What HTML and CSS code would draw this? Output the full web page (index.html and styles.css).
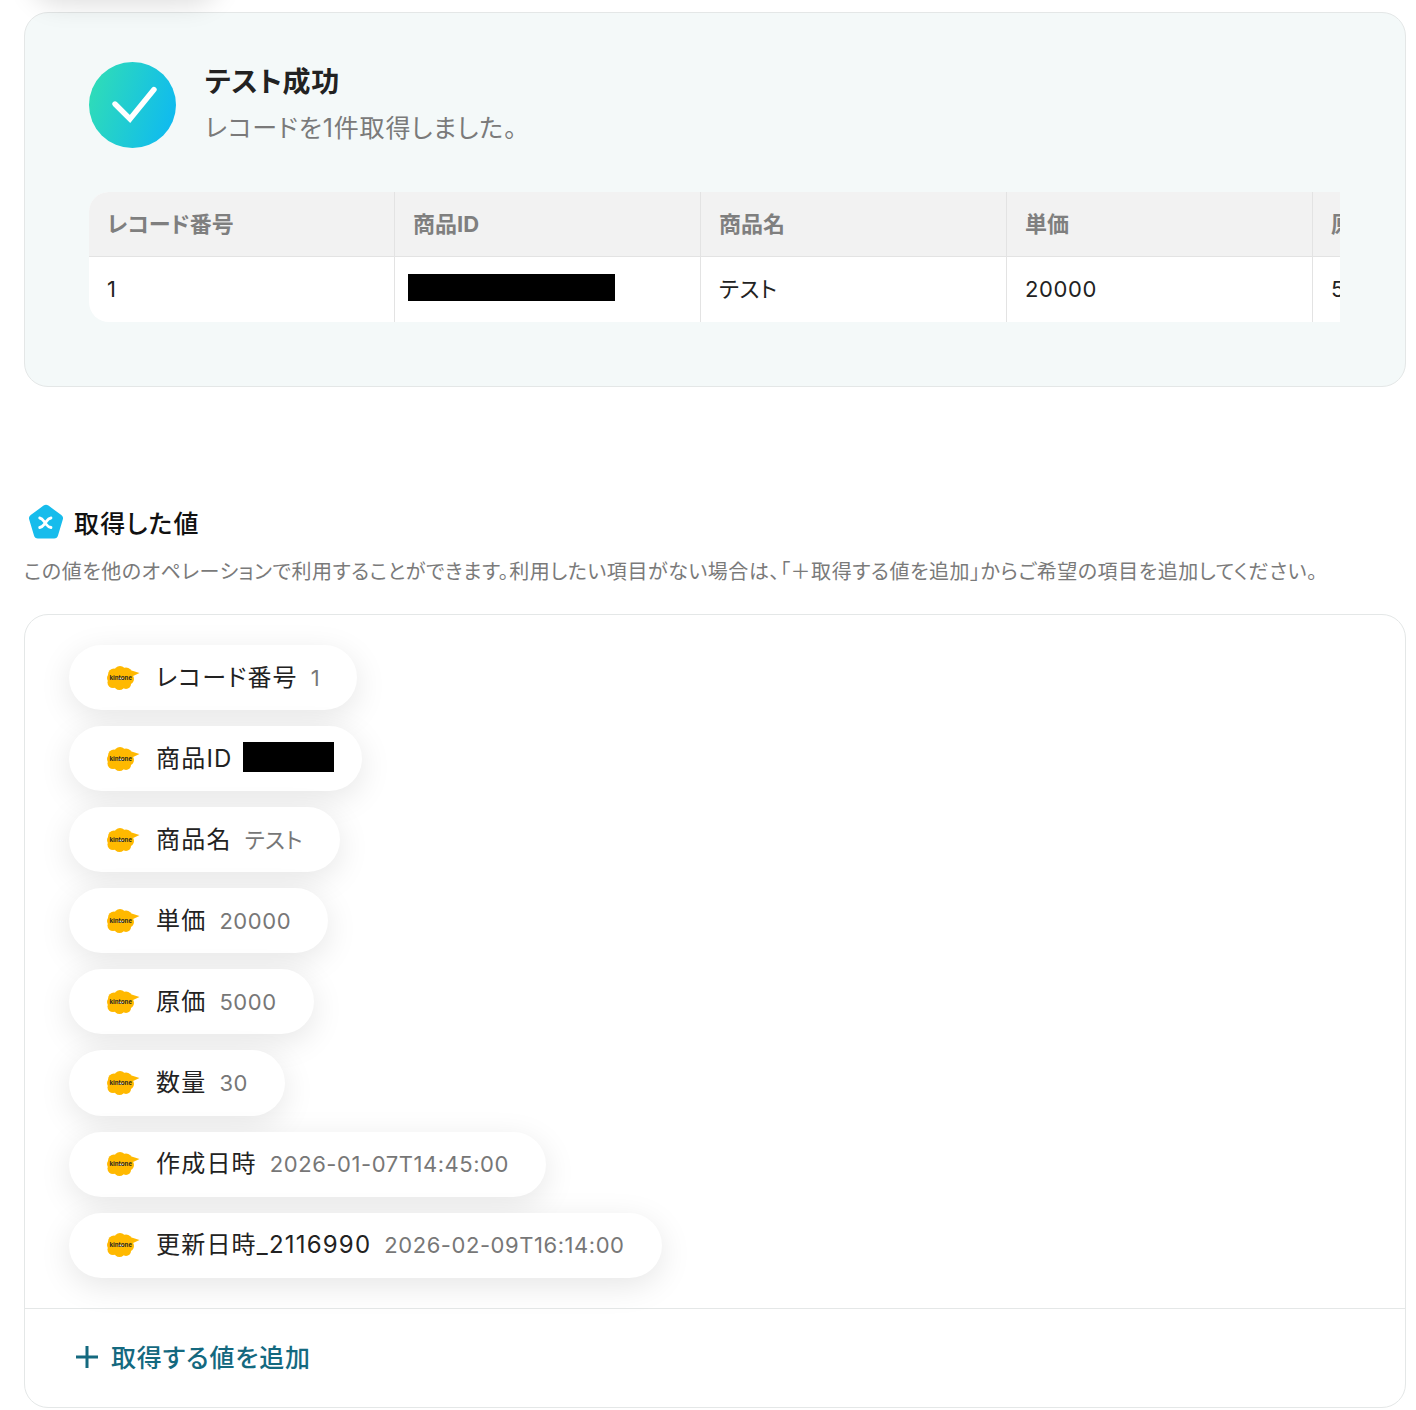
FILE: index.html
```html
<!DOCTYPE html>
<html lang="ja">
<head>
<meta charset="utf-8">
<title>テスト成功</title>
<link rel="stylesheet" href="styles.css">
</head>
<body>
<div class="page">
  <div class="clipped-shadow"></div>
  <section class="result-card">
    <div class="result-head">
      <svg class="check" viewBox="0 0 87 86" aria-hidden="true">
        <defs><linearGradient id="chk" x1="0" y1="0.35" x2="1" y2="0.65"><stop offset="0" stop-color="#2fdcb8"/><stop offset="1" stop-color="#0fbaf0"/></linearGradient></defs>
        <ellipse cx="43.5" cy="43" rx="43.5" ry="43" fill="url(#chk)"/>
        <path d="M26 42 L41 57 L65 27.500" fill="none" stroke="#fff" stroke-width="5.4" stroke-linecap="round" stroke-linejoin="miter"/>
      </svg>
      <div class="result-text">
        <h2 class="result-title">テスト成功</h2>
        <p class="result-sub">レコードを1件取得しました。</p>
      </div>
    </div>
    <div class="table-clip">
      <div class="record-table">
        <div class="cell head">レコード番号</div>
        <div class="cell head">商品ID</div>
        <div class="cell head">商品名</div>
        <div class="cell head">単価</div>
        <div class="cell head">原価</div>
        <div class="cell body">1</div>
        <div class="cell body"><span class="redact redact-table"></span></div>
        <div class="cell body">テスト</div>
        <div class="cell body">20000</div>
        <div class="cell body">5000</div>
      </div>
    </div>
  </section>

  <div class="values-title">
    <svg class="pentagon" viewBox="0 0 36 36" aria-hidden="true">
      <path d="M15.6 1.6 a4 4 0 0 1 4.8 0 L33.3 11 a4 4 0 0 1 1.5 4.5 L30 31.6 a4 4 0 0 1 -3.9 3 H9.9 a4 4 0 0 1 -3.9 -3 L1.2 15.5 A4 4 0 0 1 2.7 11 Z" fill="#17bcec"/>
      <path d="M11.700 14 C14.700 14.500 15.200 16.500 17.200 19 C19.200 21.500 19.700 23 23 23.500 M11.700 23.500 C14.700 23 15.200 21.500 17.200 19 C19.200 16.500 19.700 14.500 23 14" fill="none" stroke="#fff" stroke-width="2.8" stroke-linecap="round"/>
    </svg>
    <h2 class="values-heading">取得した値</h2>
  </div>
  <p class="values-desc">この値を他のオペレーションで利用することができます。利用したい項目がない場合は、「＋取得する値を追加」からご希望の項目を追加してください。</p>

  <section class="values-card">
    <ul class="pills">
      <li class="pill"><svg class="kt" viewBox="0 0 34 26" aria-hidden="true"><use href="#cloud"/><text x="3.500" y="14.500" class="kt-text">kintone</text></svg><span class="pill-label">レコード番号</span><span class="pill-value">1</span></li>
      <li class="pill"><svg class="kt" viewBox="0 0 34 26" aria-hidden="true"><use href="#cloud"/><text x="3.500" y="14.500" class="kt-text">kintone</text></svg><span class="pill-label">商品ID</span><span class="redact redact-pill"></span></li>
      <li class="pill"><svg class="kt" viewBox="0 0 34 26" aria-hidden="true"><use href="#cloud"/><text x="3.500" y="14.500" class="kt-text">kintone</text></svg><span class="pill-label">商品名</span><span class="pill-value">テスト</span></li>
      <li class="pill"><svg class="kt" viewBox="0 0 34 26" aria-hidden="true"><use href="#cloud"/><text x="3.500" y="14.500" class="kt-text">kintone</text></svg><span class="pill-label">単価</span><span class="pill-value">20000</span></li>
      <li class="pill"><svg class="kt" viewBox="0 0 34 26" aria-hidden="true"><use href="#cloud"/><text x="3.500" y="14.500" class="kt-text">kintone</text></svg><span class="pill-label">原価</span><span class="pill-value">5000</span></li>
      <li class="pill"><svg class="kt" viewBox="0 0 34 26" aria-hidden="true"><use href="#cloud"/><text x="3.500" y="14.500" class="kt-text">kintone</text></svg><span class="pill-label">数量</span><span class="pill-value">30</span></li>
      <li class="pill"><svg class="kt" viewBox="0 0 34 26" aria-hidden="true"><use href="#cloud"/><text x="3.500" y="14.500" class="kt-text">kintone</text></svg><span class="pill-label">作成日時</span><span class="pill-value">2026-01-07T14:45:00</span></li>
      <li class="pill"><svg class="kt" viewBox="0 0 34 26" aria-hidden="true"><use href="#cloud"/><text x="3.500" y="14.500" class="kt-text">kintone</text></svg><span class="pill-label">更新日時_2116990</span><span class="pill-value">2026-02-09T16:14:00</span></li>
    </ul>
    <div class="add-row">
      <svg class="plus" viewBox="0 0 24 24" aria-hidden="true"><path d="M12 1 V23 M1 12 H23" stroke="#14697f" stroke-width="3" fill="none"/></svg>
      <span class="add-label">取得する値を追加</span>
    </div>
  </section>
</div>
<svg class="defs" aria-hidden="true"><defs>
  <g id="cloud" fill="#ffb900">
    <circle cx="8" cy="9.500" r="6"/><circle cx="14" cy="7" r="6"/><circle cx="20" cy="8.500" r="6"/>
    <circle cx="22.500" cy="14" r="5.500"/><circle cx="20" cy="19" r="5"/><circle cx="13.500" cy="19.500" r="5.500"/>
    <circle cx="7" cy="17.500" r="5.500"/><circle cx="6" cy="13" r="5"/>
    <path d="M24 5 L33.500 8 L25 12 Z"/>
  </g>
</defs></svg>
</body>
</html>
```

FILE: styles.css
```css
* { box-sizing: border-box; }
html, body { margin: 0; padding: 0; background: #fff; }
body {
  font-family: Inter, "Noto Sans CJK JP", sans-serif;
  color: #222;
  letter-spacing: 0.04em;
  font-feature-settings: "palt";
  overflow: hidden;
}
.page { position: relative; width: 1416px; height: 1410px; padding: 12px 10px 0 24px; overflow: hidden; }
.defs { position: absolute; width: 0; height: 0; }
.clipped-shadow {
  position: absolute; left: 30px; top: -60px; width: 190px; height: 60px;
  border-radius: 30px; box-shadow: 0 5px 26px rgba(0,0,0,.13);
}
h2, p, ul { margin: 0; padding: 0; }

.result-card {
  height: 375px; border: 1px solid #e4e7e7; border-radius: 24px;
  background: #f4f9f9; padding: 49px 65px 0 64px;
}
.result-head { display: flex; gap: 29px; height: 130px; align-items: flex-start; }
.check { width: 87px; height: 86px; flex: none; }
.result-text { display: flex; flex-direction: column; }
.result-title { font-size: 28px; font-weight: 700; line-height: 40px; height: 40px; }
.result-sub { font-size: 25px; line-height: 36px; margin-top: 8px; color: #7a7a7a; font-weight: 400; letter-spacing: 0.035em; }

.table-clip { width: 1251px; overflow: hidden; }
.record-table {
  width: 1530px; display: grid; grid-template-columns: repeat(5, 306px);
  grid-template-rows: 65px 65px; border-radius: 20px; overflow: hidden; background: #fff;
}
.cell {
  display: flex; align-items: center; padding-left: 18px; font-size: 22px; line-height: 30px;
  border-right: 1px solid #e3e3e3; white-space: nowrap;
}
.cell.head { background: #f2f2f2; color: #7f7f7f; font-weight: 700; letter-spacing: 0; border-bottom: 1px solid #e3e3e3; padding-bottom: 1px; }
.cell.body { color: #222; padding-bottom: 1px; }
.redact { display: inline-block; background: #000; flex: none; }
.redact-table { width: 207px; height: 27px; margin: -3px 0 0 -5px; }

.values-title { display: flex; align-items: center; gap: 10px; margin: 117px 0 0 4px; height: 36px; }
.pentagon { width: 36px; height: 36px; flex: none; }
.values-heading { font-size: 25px; font-weight: 500; color: #111; line-height: 36px; padding-top: 4px; letter-spacing: 0.045em; }
.values-desc { font-size: 20px; line-height: 28px; margin-top: 18px; color: #7a7a7a; white-space: nowrap; letter-spacing: 0.028em; }

.values-card { margin-top: 28px; height: 794px; border: 1px solid #e4e7e7; border-radius: 24px; background: #fff; }
.pills { list-style: none; display: flex; flex-direction: column; align-items: flex-start; gap: 16px; padding: 30px 0 30px 44px; border-bottom: 1px solid #e4e7e7; }
.pill {
  display: flex; align-items: center; height: 65.1px; padding: 0 37px 0 36.5px; border-radius: 33px;
  background: #fff; box-shadow: 0 8px 32px rgba(0,0,0,.10);
}
.kt { width: 34px; height: 26px; flex: none; margin-right: 16.500px; }
.kt-text { font-family: "Liberation Sans", sans-serif; font-size: 6.300px; font-weight: 700; fill: #222; letter-spacing: 0; }
.pill-label { font-size: 24px; color: #222; line-height: 36px; white-space: nowrap; letter-spacing: 0.05em; }
.pill-value { font-size: 22px; line-height: 30px; color: #777; margin-left: 13px; white-space: nowrap; letter-spacing: 0.025em; }
.redact-pill { width: 91px; height: 30px; margin: -4px -9px 0 10px; }

.add-row { display: flex; align-items: center; gap: 12px; height: 98px; padding: 0 0 1px 50px; }
.plus { width: 24px; height: 24px; flex: none; }
.add-label { font-size: 25px; font-weight: 500; color: #14697f; letter-spacing: 0.034em; margin-top: -2px; }
```
